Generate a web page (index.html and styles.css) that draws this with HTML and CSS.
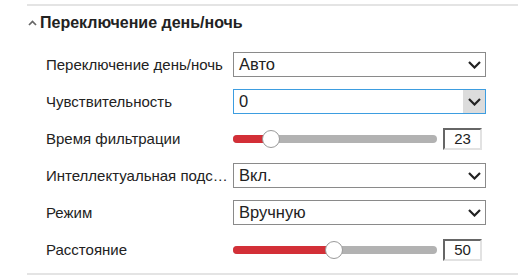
FILE: index.html
```html
<!DOCTYPE html>
<html lang="ru">
<head>
    <meta charset="UTF-8">
    <title>День/ночь</title>
    <link rel="stylesheet" href="styles.css">
</head>
<body>
    <div class="section">
        <div class="section-title">
            <svg class="caret" width="9" height="6" viewBox="0 0 9 6"><path d="M1 5 L4.5 1.5 L8 5" fill="none" stroke="#666" stroke-width="1.7"/></svg>
            <span>Переключение день/ночь</span>
        </div>

        <div class="row">
            <div class="label">Переключение день/ночь</div>
            <div class="select">
                <span>Авто</span>
                <span class="arrow"><svg width="13" height="8" viewBox="0 0 13 8"><path d="M1 1 L6.5 6.5 L12 1" fill="none" stroke="#222" stroke-width="2.2"/></svg></span>
            </div>
        </div>

        <div class="row">
            <div class="label">Чувствительность</div>
            <div class="select focus">
                <span>0</span>
                <span class="arrow"><svg width="13" height="8" viewBox="0 0 13 8"><path d="M1 1 L6.5 6.5 L12 1" fill="none" stroke="#222" stroke-width="2.2"/></svg></span>
            </div>
        </div>

        <div class="row">
            <div class="label">Время фильтрации</div>
            <div class="slider">
                <div class="track">
                    <div class="fill" style="width: 38px"></div>
                    <div class="thumb" style="left: 38px"></div>
                </div>
            </div>
            <div class="num">23</div>
        </div>

        <div class="row">
            <div class="label">Интеллектуальная подсветка</div>
            <div class="select">
                <span>Вкл.</span>
                <span class="arrow"><svg width="13" height="8" viewBox="0 0 13 8"><path d="M1 1 L6.5 6.5 L12 1" fill="none" stroke="#222" stroke-width="2.2"/></svg></span>
            </div>
        </div>

        <div class="row">
            <div class="label">Режим</div>
            <div class="select">
                <span>Вручную</span>
                <span class="arrow"><svg width="13" height="8" viewBox="0 0 13 8"><path d="M1 1 L6.5 6.5 L12 1" fill="none" stroke="#222" stroke-width="2.2"/></svg></span>
            </div>
        </div>

        <div class="row">
            <div class="label">Расстояние</div>
            <div class="slider">
                <div class="track">
                    <div class="fill" style="width: 101px"></div>
                    <div class="thumb" style="left: 101px"></div>
                </div>
            </div>
            <div class="num">50</div>
        </div>
    </div>
</body>
</html>
```

FILE: styles.css
```css
body {
    margin: 0;
    background-color: #fff;
    font-family: "Liberation Sans", Arial, sans-serif;
    color: #222;
}

.section {
    margin: 4px 0 0 27px;
    border-top: 2px solid #e4e4e4;
    border-bottom: 2px solid #e4e4e4;
    padding-bottom: 5px;
}

.section-title {
    display: flex;
    align-items: center;
    height: 34px;
    padding-bottom: 6px;
    font-size: 16px;
    font-weight: bold;
    color: #222;
}

.caret {
    margin: 0 3px 0 1px;
}

.row {
    display: flex;
    align-items: center;
    height: 37px;
    padding-left: 19px;
    font-size: 15px;
}

.label {
    width: 182px;
    margin-right: 5px;
    white-space: nowrap;
    overflow: hidden;
    text-overflow: ellipsis;
}

.select {
    display: flex;
    align-items: center;
    justify-content: space-between;
    box-sizing: border-box;
    width: 253px;
    height: 25px;
    border: 1px solid #8a8a8a;
    padding-left: 5px;
    font-size: 16.5px;
}

.select.focus {
    border-color: #3d9de0;
}

.arrow {
    display: flex;
    align-items: center;
    justify-content: center;
    width: 22px;
    height: 100%;
}

.select.focus .arrow {
    background-color: #dcdcdc;
}

.slider {
    width: 204px;
    margin-right: 6px;
}

.track {
    position: relative;
    height: 8px;
    border-radius: 4px;
    background-color: #b2b2b2;
}

.fill {
    height: 8px;
    border-radius: 4px 0 0 4px;
    background-color: #d32f37;
}

.thumb {
    position: absolute;
    top: -5px;
    width: 16px;
    height: 16px;
    margin-left: -9px;
    border: 1px solid #9a9a9a;
    border-radius: 50%;
    background-color: #fff;
}

.num {
    box-sizing: border-box;
    width: 39px;
    height: 22px;
    border-top: 2px solid #666;
    border-left: 2px solid #666;
    border-right: 2px solid #e2e2e2;
    border-bottom: 2px solid #e2e2e2;
    text-align: center;
    line-height: 18px;
    font-size: 15px;
}
```
